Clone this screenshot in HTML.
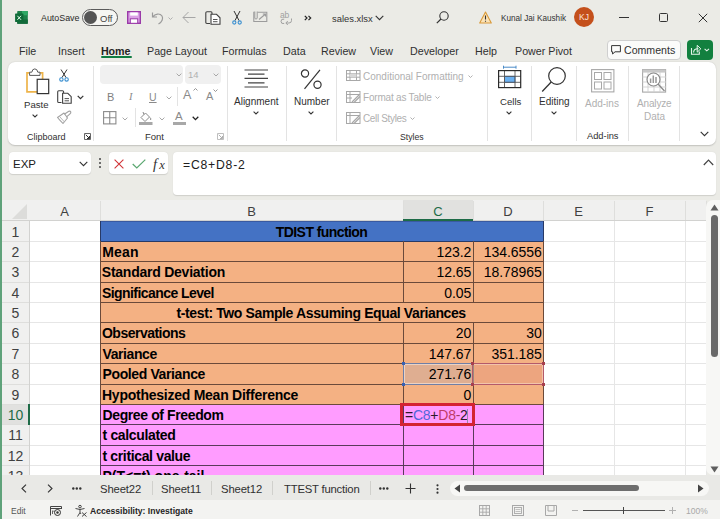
<!DOCTYPE html>
<html><head><meta charset="utf-8">
<style>
*{box-sizing:border-box;margin:0;padding:0}
html,body{width:720px;height:519px;overflow:hidden}
body{position:relative;background:#ebebe6;font-family:"Liberation Sans",sans-serif;color:#242424}
.a{position:absolute;white-space:nowrap}
svg{position:absolute;overflow:visible}
.t{font-size:10.7px;color:#303030;margin-top:1px}
</style></head><body>
<!-- window left border -->
<div class="a" style="left:0;top:0;width:2px;height:519px;background:#5fa27a"></div>

<!-- ===== TITLE BAR ===== -->
<div id="title">
<!-- excel icon -->
<svg style="left:15px;top:11px" width="14" height="14" viewBox="0 0 14 14">
<rect x="2.2" y="0" width="10.6" height="12.8" rx="0.8" fill="#1d8049"/>
<rect x="7" y="0" width="5.8" height="4.3" fill="#2fa865"/>
<rect x="2.2" y="8.5" width="10.6" height="4.3" fill="#146a3b"/>
<rect x="0.1" y="2.6" width="8.3" height="8.4" rx="0.6" fill="#0f6b38"/>
<path d="M2.4 4.8 L6 8.8 M6 4.8 L2.4 8.8" stroke="#e8fff0" stroke-width="1"/>
</svg>
<div class="a" style="left:41px;top:13px;font-size:8.9px;color:#2a2a2a">AutoSave</div>
<div class="a" style="left:82px;top:9px;width:36px;height:17px;border:1px solid #5a5a5a;border-radius:9px;background:#f6f6f3"></div>
<div class="a" style="left:84px;top:11px;width:13px;height:13px;border-radius:50%;background:#555"></div>
<div class="a" style="left:100px;top:13px;font-size:9.5px;color:#444">Off</div>
<!-- save -->
<svg style="left:127px;top:11px" width="14" height="13" viewBox="0 0 14 13">
<rect x="0.7" y="0.7" width="12.6" height="11.6" fill="#dba2e6" stroke="#9a3aa8" stroke-width="1.4"/>
<rect x="3.2" y="1.4" width="7.6" height="3.2" fill="#fff"/>
<rect x="3.3" y="7.8" width="7.4" height="4.5" fill="#fff" stroke="#9a3aa8" stroke-width="1"/>
</svg>
<!-- undo -->
<svg style="left:151px;top:11px" width="22" height="14" viewBox="0 0 22 14">
<path d="M1.5 1.5 V6 H6 M1.8 5.8 C4 2.5 9 2 11 5 C12.5 7.5 11 11 7.5 13" fill="none" stroke="#9a9a9a" stroke-width="1.2"/>
<path d="M17.5 6.5 L19.5 8.5 L21.5 6.5" fill="none" stroke="#a8a8a8" stroke-width="0.9"/>
</svg>
<!-- back arrow -->
<svg style="left:182px;top:11px" width="14" height="13" viewBox="0 0 14 13">
<path d="M13.5 6.5 H1 M6.5 1 L1 6.5 L6.5 12" fill="none" stroke="#a6a6a6" stroke-width="1"/>
</svg>
<!-- copy -->
<svg style="left:205px;top:11px" width="16" height="14" viewBox="0 0 16 14">
<path d="M5 12.5 H2 Q0.8 12.5 0.8 11.3 V1.8 Q0.8 0.7 2 0.7 H6 Q7 0.7 7 2 V3" fill="none" stroke="#404040" stroke-width="1.1"/>
<path d="M6 3.3 H11.5 L15 6.8 V13.3 H6 Z" fill="#fff" stroke="#404040" stroke-width="1.1"/>
<path d="M8 8.5 H12.5 M8 10.7 H12.5" stroke="#404040" stroke-width="0.9"/>
</svg>
<!-- scissors -->
<svg style="left:231px;top:10px" width="12" height="15" viewBox="0 0 12 15">
<path d="M3 1 L8 10.5 M9 1 L4 10.5" stroke="#333" stroke-width="1"/>
<circle cx="3.3" cy="12.5" r="1.6" fill="none" stroke="#3a8fd0" stroke-width="1.1"/>
<circle cx="8.7" cy="12.5" r="1.6" fill="none" stroke="#3a8fd0" stroke-width="1.1"/>
</svg>
<!-- picture -->
<svg style="left:253px;top:11px" width="15" height="12" viewBox="0 0 15 12">
<path d="M4.5 1.2 H13.8 V10.5 H0.8 V1.2 H1.5" fill="none" stroke="#9c9c9c" stroke-width="1.1"/>
<path d="M1.8 0.5 V7 Q1.8 8 3 8 Q4.2 8 4.2 7 V0.5" fill="none" stroke="#9c9c9c" stroke-width="1"/>
<path d="M6 8.5 L12.5 3 M9.8 3 H12.5 V5.5" fill="none" stroke="#9c9c9c" stroke-width="1.1"/>
</svg>
<!-- ab -->
<div class="a" style="left:280px;top:9.5px;font-size:8.5px;color:#a0a0a0;letter-spacing:-0.2px">ab</div>
<svg style="left:280px;top:18px" width="13" height="7" viewBox="0 0 13 7">
<path d="M4.2 1.2 Q1 0.5 1 3.3 Q1 6.2 4.2 5.5" fill="none" stroke="#a0a0a0" stroke-width="1"/>
<path d="M11.5 0.5 V2.5 Q11.5 5 9 5 H6 M7.8 3 L5.8 5 L7.8 7" fill="none" stroke="#a0a0a0" stroke-width="1"/>
</svg>
<svg style="left:304px;top:15px" width="8" height="6" viewBox="0 0 8 6"><path d="M0.8 0.8 L3 3 L0.8 5.2 M4.5 0.8 L6.7 3 L4.5 5.2" fill="none" stroke="#222" stroke-width="1.2"/></svg>
<div class="a" style="left:332px;top:12.5px;font-size:9.4px;color:#333">sales.xlsx</div>
<svg style="left:375px;top:15px" width="9" height="6" viewBox="0 0 9 6"><path d="M0.7 0.8 L4.5 4.6 L8.3 0.8" fill="none" stroke="#333" stroke-width="1.1"/></svg>
<!-- search -->
<svg style="left:436px;top:11px" width="13" height="13" viewBox="0 0 13 13">
<circle cx="8" cy="5" r="4.2" fill="none" stroke="#333" stroke-width="1.1"/>
<path d="M5 8 L0.8 12.2" stroke="#333" stroke-width="1.2"/>
</svg>
<!-- warning -->
<svg style="left:479px;top:11px" width="13" height="13" viewBox="0 0 13 13">
<path d="M6.5 1 L12.3 12 H0.7 Z" fill="#fbe3b8" stroke="#d99a3a" stroke-width="1.1" stroke-linejoin="round"/>
<path d="M6.5 4.5 V8.5 M6.5 9.7 V10.8" stroke="#333" stroke-width="1.1"/>
</svg>
<div class="a" style="left:501px;top:13.5px;font-size:8.2px;color:#333">Kunal Jai Kaushik</div>
<div class="a" style="left:574px;top:7px;width:20px;height:20px;border-radius:50%;background:#c4501c;color:#fde7da;font-size:8.5px;line-height:20px;text-align:center">KJ</div>
<!-- window controls -->
<div class="a" style="left:619px;top:17px;width:10px;height:1px;background:#333"></div>
<div class="a" style="left:659px;top:13px;width:9px;height:9px;border:1px solid #333;border-radius:1.5px"></div>
<svg style="left:698px;top:13px" width="10" height="10" viewBox="0 0 10 10"><path d="M0.8 0.8 L9.2 9.2 M9.2 0.8 L0.8 9.2" stroke="#333" stroke-width="1"/></svg>
</div>

<!-- ===== MENU ===== -->
<div id="menu">
<div class="a t" style="left:19px;top:44px">File</div>
<div class="a t" style="left:58px;top:44px">Insert</div>
<div class="a t" style="left:101px;top:44px;font-weight:bold;color:#242424;letter-spacing:-0.1px">Home</div>
<div class="a" style="left:101px;top:56px;width:31px;height:2px;background:#107c41;border-radius:1px"></div>
<div class="a t" style="left:147px;top:44px">Page Layout</div>
<div class="a t" style="left:222px;top:44px">Formulas</div>
<div class="a t" style="left:283px;top:44px">Data</div>
<div class="a t" style="left:321px;top:44px">Review</div>
<div class="a t" style="left:370px;top:44px">View</div>
<div class="a t" style="left:410px;top:44px">Developer</div>
<div class="a t" style="left:475px;top:44px">Help</div>
<div class="a t" style="left:515px;top:44px">Power Pivot</div>
<div class="a" style="left:607px;top:40px;width:74px;height:20px;border:1px solid #cfcfcf;border-radius:4px;background:#fbfbfa"></div>
<svg style="left:611px;top:45px" width="10" height="10" viewBox="0 0 10 10"><path d="M0.6 0.6 H9.4 V6.8 H4 L1.6 9 V6.8 H0.6 Z" fill="none" stroke="#333" stroke-width="1" stroke-linejoin="round"/></svg>
<div class="a t" style="left:624px;top:43px;font-size:10.6px">Comments</div>
<div class="a" style="left:687px;top:40px;width:26px;height:20px;border-radius:4px;background:#13803f"></div>
<svg style="left:689px;top:43px" width="22" height="14" viewBox="0 0 22 14">
<path d="M2.5 5 V11.3 H10.3 V8.5" fill="none" stroke="#e8f5ec" stroke-width="1.1"/>
<path d="M4.6 9.5 Q4.6 5.8 8.8 5.8 H9.5" fill="none" stroke="#e8f5ec" stroke-width="1.1"/>
<path d="M8.2 2.3 L11.8 5.8 L8.2 9.2 Z" fill="none" stroke="#e8f5ec" stroke-width="1" stroke-linejoin="round"/>
<path d="M15.6 5.8 L17.8 7.8 L20 5.8" fill="none" stroke="#e8f5ec" stroke-width="1.1"/>
</svg>
</div>

<!-- ===== RIBBON ===== -->
<div class="a" style="left:8px;top:62px;width:708px;height:83px;background:#fff;border-radius:7px;box-shadow:0 0.5px 1.5px rgba(0,0,0,.18)"></div>
<!-- separators -->
<div class="a" style="left:93px;top:66px;width:1px;height:75px;background:#e3e3e3"></div>
<div class="a" style="left:227px;top:66px;width:1px;height:75px;background:#e3e3e3"></div>
<div class="a" style="left:286px;top:66px;width:1px;height:75px;background:#e3e3e3"></div>
<div class="a" style="left:336px;top:66px;width:1px;height:75px;background:#e3e3e3"></div>
<div class="a" style="left:487px;top:66px;width:1px;height:75px;background:#e3e3e3"></div>
<div class="a" style="left:531px;top:66px;width:1px;height:75px;background:#e3e3e3"></div>
<div class="a" style="left:576px;top:66px;width:1px;height:75px;background:#e3e3e3"></div>
<div class="a" style="left:628px;top:66px;width:1px;height:75px;background:#e3e3e3"></div>
<div class="a" style="left:679px;top:66px;width:1px;height:75px;background:#e3e3e3"></div>
<!-- Clipboard -->
<svg style="left:26px;top:68px" width="24" height="27" viewBox="0 0 24 27">
<path d="M3.5 4.9 H1 V23.9 H11" fill="none" stroke="#eeb44a" stroke-width="1.7"/>
<path d="M14 4.9 H16.6 V11" fill="none" stroke="#eeb44a" stroke-width="1.7"/>
<path d="M3.6 7.4 V4.2 H5.8 Q6.3 0.9 8.8 0.9 Q11.3 0.9 11.8 4.2 H14 V7.4 Z" fill="#fff" stroke="#5a5a5a" stroke-width="1"/>
<rect x="11.2" y="11.3" width="11.5" height="14.3" fill="#fff" stroke="#333" stroke-width="1.2"/>
</svg>
<div class="a" style="left:24px;top:99px;font-size:9.6px;color:#303030">Paste</div>
<svg style="left:32px;top:114px" width="6" height="4" viewBox="0 0 6 4"><path d="M0.6 0.6 L3 3 L5.4 0.6" fill="none" stroke="#333" stroke-width="1.1"/></svg>
<svg style="left:59px;top:69px" width="10" height="13" viewBox="0 0 10 13">
<path d="M2 0.5 L7 8.5 M8 0.5 L3 8.5" stroke="#333" stroke-width="1"/>
<circle cx="2.4" cy="10.4" r="1.7" fill="none" stroke="#3a8fd0" stroke-width="1.1"/>
<circle cx="7.6" cy="10.4" r="1.7" fill="none" stroke="#3a8fd0" stroke-width="1.1"/>
</svg>
<svg style="left:57px;top:90px" width="15" height="14" viewBox="0 0 15 14">
<path d="M4.5 12.5 H1.8 Q0.7 12.5 0.7 11.4 V1.8 Q0.7 0.7 1.8 0.7 H5.5 Q6.6 0.7 6.6 1.8 V3" fill="none" stroke="#404040" stroke-width="1.1"/>
<path d="M5.6 3.3 H10.8 L14.2 6.7 V13.3 H5.6 Z" fill="#fff" stroke="#404040" stroke-width="1.1"/>
<path d="M7.6 8.6 H12 M7.6 10.8 H12" stroke="#404040" stroke-width="0.9"/>
</svg>
<svg style="left:77px;top:95px" width="7" height="5" viewBox="0 0 7 5"><path d="M0.7 0.8 L3.5 3.6 L6.3 0.8" fill="none" stroke="#333" stroke-width="1.2"/></svg>
<svg style="left:52px;top:106px" width="24" height="22" viewBox="0 0 24 22">
<path d="M5.5 11.5 L12 7 L15.5 12 L11 17.5 Z" fill="none" stroke="#a2a2a2" stroke-width="1.1" stroke-linejoin="round"/>
<path d="M8 11 L12.5 16 M7 13.5 L10 16.5" stroke="#b0b0b0" stroke-width="0.9"/>
<path d="M12.3 8.2 L16.8 5.2 Q18.3 4.8 18.8 6 Q19 7 18 7.8 L14.3 11.2" fill="none" stroke="#a2a2a2" stroke-width="1.1" stroke-linejoin="round"/>
</svg>
<div class="a" style="left:27px;top:132px;font-size:9px;color:#303030">Clipboard</div>
<svg style="left:84px;top:133px" width="7" height="7" viewBox="0 0 7 7"><path d="M0.5 0.5 H6.5 V6.5 H0.5 Z" fill="none" stroke="#555" stroke-width="0.9"/><path d="M1.8 1.8 L5.5 5.5 M5.5 3 V5.5 H3" fill="none" stroke="#333" stroke-width="1"/></svg>
<!-- Font -->
<div class="a" style="left:100px;top:65px;width:83px;height:19px;background:#f0f0f0;border-radius:4px"></div>
<svg style="left:176px;top:73px" width="6" height="4" viewBox="0 0 6 4"><path d="M0.6 0.6 L3 3 L5.4 0.6" fill="none" stroke="#a8a8a8" stroke-width="1"/></svg>
<div class="a" style="left:185px;top:65px;width:36px;height:19px;background:#f0f0f0;border-radius:4px"></div>
<div class="a" style="left:188px;top:69px;font-size:9.5px;color:#b0b0b0">14</div>
<svg style="left:213px;top:73px" width="6" height="4" viewBox="0 0 6 4"><path d="M0.6 0.6 L3 3 L5.4 0.6" fill="none" stroke="#a8a8a8" stroke-width="1"/></svg>
<div class="a" style="left:107px;top:90.5px;font-size:11px;color:#808080">B</div>
<div class="a" style="left:129px;top:90.5px;font-size:10.5px;font-style:italic;color:#8a8a8a;font-family:'Liberation Serif',serif">I</div>
<div class="a" style="left:149px;top:90.5px;font-size:10.5px;color:#8a8a8a;text-decoration:underline">U</div>
<svg style="left:166px;top:96px" width="6" height="4" viewBox="0 0 6 4"><path d="M0.6 0.6 L3 3 L5.4 0.6" fill="none" stroke="#a8a8a8" stroke-width="1"/></svg>
<div class="a" style="left:177px;top:87px;width:1px;height:19px;background:#e3e3e3"></div>
<div class="a" style="left:183px;top:88px;font-size:12.5px;color:#8a8a8a">A</div>
<svg style="left:193px;top:88px" width="5" height="3" viewBox="0 0 5 3"><path d="M0.5 2.5 L2.5 0.5 L4.5 2.5" fill="none" stroke="#8a8a8a" stroke-width="0.9"/></svg>
<div class="a" style="left:206px;top:90px;font-size:11px;color:#8a8a8a">A</div>
<svg style="left:213px;top:89px" width="5" height="3" viewBox="0 0 5 3"><path d="M0.5 0.5 L2.5 2.5 L4.5 0.5" fill="none" stroke="#8a8a8a" stroke-width="0.9"/></svg>
<svg style="left:103px;top:111px" width="14" height="14" viewBox="0 0 14 14"><rect x="0.6" y="0.6" width="12.3" height="12.3" fill="none" stroke="#8a8a8a" stroke-width="1.1"/><path d="M6.75 0.6 V12.9 M0.6 6.75 H12.9" stroke="#8a8a8a" stroke-width="1.1"/></svg>
<svg style="left:122px;top:117px" width="6" height="4" viewBox="0 0 6 4"><path d="M0.6 0.6 L3 3 L5.4 0.6" fill="none" stroke="#a8a8a8" stroke-width="1"/></svg>
<div class="a" style="left:135px;top:108px;width:1px;height:19px;background:#e3e3e3"></div>
<svg style="left:139px;top:111px" width="14" height="14" viewBox="0 0 14 14"><path d="M2 6.5 L6.5 2 L10.5 6 L6 10.5 Z" fill="none" stroke="#8a8a8a" stroke-width="1"/><path d="M5 3.5 L4 1" stroke="#8a8a8a" stroke-width="1"/><path d="M11 6.5 Q12.5 8 11.5 9" fill="none" stroke="#8a8a8a" stroke-width="1"/><rect x="0" y="11" width="13.5" height="3" fill="#a8a8a8"/></svg>
<svg style="left:159px;top:117px" width="6" height="4" viewBox="0 0 6 4"><path d="M0.6 0.6 L3 3 L5.4 0.6" fill="none" stroke="#a8a8a8" stroke-width="1"/></svg>
<div class="a" style="left:175px;top:109.5px;font-size:11.5px;color:#8a8a8a">A</div>
<div class="a" style="left:173px;top:122px;width:13px;height:3px;background:#a8a8a8"></div>
<svg style="left:192px;top:116px" width="7" height="5" viewBox="0 0 7 5"><path d="M0.7 0.8 L3.5 3.6 L6.3 0.8" fill="none" stroke="#222" stroke-width="1.3"/></svg>
<div class="a" style="left:145px;top:131px;font-size:9.5px;color:#303030">Font</div>
<svg style="left:217px;top:133px" width="7" height="7" viewBox="0 0 7 7"><path d="M0.5 0.5 H6.5 V6.5 H0.5 Z" fill="none" stroke="#b8b8b8" stroke-width="0.9"/><path d="M1.8 1.8 L5.5 5.5 M5.5 3 V5.5 H3" fill="none" stroke="#b0b0b0" stroke-width="1"/></svg>
<!-- Alignment -->
<svg style="left:244px;top:69px" width="25" height="19" viewBox="0 0 25 19">
<path d="M0.5 1 H24 M4 5.2 H20.5 M0.5 9.3 H24 M4 13.8 H20.5 M0.5 18 H24" stroke="#444" stroke-width="1.2"/>
</svg>
<div class="a" style="left:234px;top:95.8px;font-size:10px;color:#303030">Alignment</div>
<svg style="left:253px;top:111px" width="6" height="4" viewBox="0 0 6 4"><path d="M0.6 0.6 L3 3 L5.4 0.6" fill="none" stroke="#333" stroke-width="1.1"/></svg>
<!-- Number -->
<svg style="left:300px;top:69px" width="23" height="21" viewBox="0 0 23 21">
<circle cx="5" cy="4.5" r="3.6" fill="none" stroke="#333" stroke-width="1.2"/>
<circle cx="17.5" cy="15.8" r="3.6" fill="none" stroke="#333" stroke-width="1.2"/>
<path d="M20 0.8 L4.5 19.8" stroke="#333" stroke-width="1.2"/>
</svg>
<div class="a" style="left:294px;top:95.8px;font-size:10px;color:#303030">Number</div>
<svg style="left:308px;top:111px" width="6" height="4" viewBox="0 0 6 4"><path d="M0.6 0.6 L3 3 L5.4 0.6" fill="none" stroke="#333" stroke-width="1.1"/></svg>
<!-- Styles -->
<svg style="left:346px;top:70px" width="15" height="11" viewBox="0 0 15 11"><rect x="0.5" y="0.5" width="13.5" height="10" fill="none" stroke="#a8a8a8" stroke-width="1"/><path d="M0.5 3.8 H14 M0.5 7.2 H14 M4 0.5 V10.5 M10.5 0.5 V10.5" stroke="#a8a8a8" stroke-width="1"/><rect x="4" y="3.8" width="6.5" height="3.4" fill="#d8d8d8"/></svg>
<div class="a" style="left:363px;top:70.5px;font-size:10px;color:#b0b0b0">Conditional Formatting</div>
<svg style="left:468px;top:74.5px" width="5" height="3" viewBox="0 0 5 3"><path d="M0.5 0.5 L2.5 2.5 L4.5 0.5" fill="none" stroke="#a8a8a8" stroke-width="0.9"/></svg>
<svg style="left:346px;top:91px" width="15" height="12" viewBox="0 0 15 12"><rect x="0.5" y="0.5" width="13.5" height="11" fill="none" stroke="#a8a8a8" stroke-width="1"/><path d="M0.5 3.5 H14 M0.5 7 H6 M4 0.5 V11.5" stroke="#a8a8a8" stroke-width="1"/><path d="M6 11 L13.5 3.5 M8 11.5 L14 5.5" stroke="#a8a8a8" stroke-width="1.2"/></svg>
<div class="a" style="left:363px;top:92px;font-size:10px;letter-spacing:-0.2px;color:#b0b0b0">Format as Table</div>
<svg style="left:435px;top:96px" width="5" height="3" viewBox="0 0 5 3"><path d="M0.5 0.5 L2.5 2.5 L4.5 0.5" fill="none" stroke="#a8a8a8" stroke-width="0.9"/></svg>
<svg style="left:346px;top:112px" width="15" height="12" viewBox="0 0 15 12"><rect x="0.5" y="0.5" width="13.5" height="11" fill="none" stroke="#a8a8a8" stroke-width="1"/><path d="M0.5 3.5 H14 M4 0.5 V11.5" stroke="#a8a8a8" stroke-width="1"/><path d="M6 11 L13.5 3.5 M8 11.5 L14 5.5" stroke="#a8a8a8" stroke-width="1.2"/></svg>
<div class="a" style="left:363px;top:113px;font-size:10px;letter-spacing:-0.35px;color:#b0b0b0">Cell Styles</div>
<svg style="left:410px;top:117px" width="5" height="3" viewBox="0 0 5 3"><path d="M0.5 0.5 L2.5 2.5 L4.5 0.5" fill="none" stroke="#a8a8a8" stroke-width="0.9"/></svg>
<div class="a" style="left:400px;top:132px;font-size:8.7px;color:#303030">Styles</div>
<!-- Cells -->
<svg style="left:498px;top:66px" width="24" height="23" viewBox="0 0 24 23">
<path d="M5.5 1.2 H18 M5.5 -0.3 V2.7 M18 -0.3 V2.7" stroke="#4a8cc8" stroke-width="1"/>
<rect x="6.5" y="10.3" width="10.5" height="6" fill="#6ab0f0" stroke="#2a64a8" stroke-width="0.8"/>
<path d="M0.6 10.3 H22.7 M0.6 16.3 H22.7 M6.5 4.6 V21.6 M17 4.6 V21.6" stroke="#555" stroke-width="0.9"/>
<rect x="0.6" y="4.6" width="22.1" height="17" fill="none" stroke="#2a2a2a" stroke-width="1.2"/>
</svg>
<div class="a" style="left:500px;top:95.8px;font-size:9.6px;color:#303030">Cells</div>
<svg style="left:506px;top:111px" width="6" height="4" viewBox="0 0 6 4"><path d="M0.6 0.6 L3 3 L5.4 0.6" fill="none" stroke="#333" stroke-width="1.1"/></svg>
<!-- Editing -->
<svg style="left:541px;top:66px" width="26" height="27" viewBox="0 0 26 27">
<circle cx="16" cy="10" r="8.3" fill="none" stroke="#333" stroke-width="1.2"/>
<path d="M10.2 16 L1.2 25.5" stroke="#333" stroke-width="1.3"/>
</svg>
<div class="a" style="left:539px;top:95.8px;font-size:10px;color:#303030">Editing</div>
<svg style="left:551px;top:111px" width="6" height="4" viewBox="0 0 6 4"><path d="M0.6 0.6 L3 3 L5.4 0.6" fill="none" stroke="#333" stroke-width="1.1"/></svg>
<!-- Add-ins -->
<svg style="left:591px;top:69px" width="24" height="24" viewBox="0 0 24 24">
<rect x="0.6" y="0.6" width="22.3" height="22.3" fill="none" stroke="#a8a8a8" stroke-width="1.1"/>
<rect x="3.5" y="3.5" width="7" height="7" fill="none" stroke="#a8a8a8" stroke-width="1"/>
<rect x="13" y="3.5" width="7" height="7" fill="none" stroke="#a8a8a8" stroke-width="1"/>
<rect x="3.5" y="13" width="7" height="7" fill="none" stroke="#a8a8a8" stroke-width="1"/>
<rect x="13" y="13" width="7" height="7" fill="none" stroke="#a8a8a8" stroke-width="1"/>
</svg>
<div class="a" style="left:585px;top:97.5px;font-size:10px;color:#b0b0b0">Add-ins</div>
<div class="a" style="left:587px;top:130.5px;font-size:9.3px;color:#303030">Add-ins</div>
<!-- Analyze Data -->
<svg style="left:642px;top:69px" width="25" height="25" viewBox="0 0 25 25">
<rect x="0.6" y="0.6" width="23" height="22.5" fill="none" stroke="#a8a8a8" stroke-width="1.1"/>
<rect x="0.6" y="0.6" width="23" height="3" fill="#c8c8c8"/>
<path d="M0.6 8 H24 M0.6 13 H24 M0.6 18 H24 M6 3 V23 M12 3 V23 M18 3 V23" stroke="#d0d0d0" stroke-width="0.9"/>
<circle cx="11.5" cy="10.5" r="6.5" fill="#fff" stroke="#8a8a8a" stroke-width="1.2"/>
<path d="M8.6 14 V9.5 M11.3 14 V6.5 M14 14 V8" stroke="#999" stroke-width="1.5"/>
<path d="M16 15 L22.5 22" stroke="#8a8a8a" stroke-width="1.3"/>
</svg>
<div class="a" style="left:637px;top:97.5px;font-size:10px;letter-spacing:-0.15px;color:#b0b0b0">Analyze</div>
<div class="a" style="left:644px;top:111px;font-size:10px;color:#b0b0b0">Data</div>
<svg style="left:700px;top:131px" width="9" height="6" viewBox="0 0 9 6"><path d="M0.7 0.8 L4.5 4.6 L8.3 0.8" fill="none" stroke="#333" stroke-width="1.1"/></svg>

<!-- ===== FORMULA BAR ===== -->
<div class="a" style="left:9px;top:152px;width:82px;height:22px;background:#fff;border-radius:4px;box-shadow:0 0.5px 1px rgba(0,0,0,.12)"></div>
<div class="a" style="left:13px;top:158px;font-size:11.5px;color:#202020">EXP</div>
<svg style="left:79px;top:161px" width="9" height="6" viewBox="0 0 9 6"><path d="M0.7 0.8 L4.5 4.6 L8.3 0.8" fill="none" stroke="#333" stroke-width="1.1"/></svg>
<div class="a" style="left:99px;top:158px;width:2px;height:2px;background:#444;border-radius:1px"></div>
<div class="a" style="left:99px;top:162px;width:2px;height:2px;background:#444;border-radius:1px"></div>
<div class="a" style="left:99px;top:166px;width:2px;height:2px;background:#444;border-radius:1px"></div>
<div class="a" style="left:109px;top:152px;width:59px;height:22px;background:#fff;border-radius:4px;box-shadow:0 0.5px 1px rgba(0,0,0,.12)"></div>
<svg style="left:114px;top:159px" width="10" height="10" viewBox="0 0 10 10"><path d="M0.6 0.6 L9.4 9.4 M9.4 0.6 L0.6 9.4" stroke="#d13438" stroke-width="1.1"/></svg>
<svg style="left:132px;top:159px" width="14" height="10" viewBox="0 0 14 10"><path d="M0.7 5 L4.8 9 L13.3 0.6" fill="none" stroke="#5aa770" stroke-width="1.2"/></svg>
<div class="a" style="left:153px;top:155.5px;font-size:14.5px;font-style:italic;font-family:'Liberation Serif',serif;color:#333;letter-spacing:0.6px">f<span style="font-size:12.5px;margin-left:1.5px">x</span></div>
<div class="a" style="left:173px;top:152px;width:543px;height:43px;background:#fff;border-radius:4px;box-shadow:0 0.5px 1px rgba(0,0,0,.12)"></div>
<div class="a" style="left:183px;top:158px;font-size:12.2px;letter-spacing:0.8px;color:#202020">=C8+D8-2</div>
<svg style="left:703px;top:159px" width="11" height="7" viewBox="0 0 11 7"><path d="M0.8 6 L5.5 1.2 L10.2 6" fill="none" stroke="#444" stroke-width="1.2"/></svg>

<!-- ===== GRID ===== -->
<div class="a" style="left:2px;top:200px;width:704px;height:275px;background:#fff"></div>
<div class="a" style="left:2px;top:200px;width:704px;height:21px;background:#f0f0ef"></div>
<div class="a" style="left:2px;top:221px;width:27px;height:254px;background:#f0f0ef"></div>
<svg style="left:0;top:0" width="720" height="519"><path d="M12 219 L27 219 L27 204 Z" fill="#dcdcda"/></svg>
<div class="a" style="left:403px;top:200px;width:70px;height:21px;background:#e1e1df"></div>
<div class="a" style="left:2px;top:404px;width:27px;height:20px;background:#e1e1df"></div>
<div class="a" style="left:100px;top:221px;width:1px;height:254px;background:#e6e6e6"></div>
<div class="a" style="left:403px;top:221px;width:1px;height:254px;background:#e6e6e6"></div>
<div class="a" style="left:473px;top:221px;width:1px;height:254px;background:#e6e6e6"></div>
<div class="a" style="left:543px;top:221px;width:1px;height:254px;background:#e6e6e6"></div>
<div class="a" style="left:614px;top:221px;width:1px;height:254px;background:#e6e6e6"></div>
<div class="a" style="left:685px;top:221px;width:1px;height:254px;background:#e6e6e6"></div>
<div class="a" style="left:706px;top:221px;width:1px;height:254px;background:#e6e6e6"></div>
<div class="a" style="left:29px;top:241px;width:677px;height:1px;background:#e6e6e6"></div>
<div class="a" style="left:29px;top:261px;width:677px;height:1px;background:#e6e6e6"></div>
<div class="a" style="left:29px;top:282px;width:677px;height:1px;background:#e6e6e6"></div>
<div class="a" style="left:29px;top:302px;width:677px;height:1px;background:#e6e6e6"></div>
<div class="a" style="left:29px;top:322px;width:677px;height:1px;background:#e6e6e6"></div>
<div class="a" style="left:29px;top:343px;width:677px;height:1px;background:#e6e6e6"></div>
<div class="a" style="left:29px;top:363px;width:677px;height:1px;background:#e6e6e6"></div>
<div class="a" style="left:29px;top:384px;width:677px;height:1px;background:#e6e6e6"></div>
<div class="a" style="left:29px;top:404px;width:677px;height:1px;background:#e6e6e6"></div>
<div class="a" style="left:29px;top:424px;width:677px;height:1px;background:#e6e6e6"></div>
<div class="a" style="left:29px;top:445px;width:677px;height:1px;background:#e6e6e6"></div>
<div class="a" style="left:29px;top:465px;width:677px;height:1px;background:#e6e6e6"></div>
<div class="a" style="left:100px;top:201px;width:1px;height:19px;background:#dededc"></div>
<div class="a" style="left:403px;top:201px;width:1px;height:19px;background:#dededc"></div>
<div class="a" style="left:473px;top:201px;width:1px;height:19px;background:#dededc"></div>
<div class="a" style="left:543px;top:201px;width:1px;height:19px;background:#dededc"></div>
<div class="a" style="left:614px;top:201px;width:1px;height:19px;background:#dededc"></div>
<div class="a" style="left:685px;top:201px;width:1px;height:19px;background:#dededc"></div>
<div class="a" style="left:706px;top:201px;width:1px;height:19px;background:#dededc"></div>
<div class="a" style="left:2px;top:220px;width:704px;height:1px;background:#d2d2d0"></div>
<div class="a" style="left:403px;top:219px;width:70px;height:2px;background:#1e6b47"></div>
<div class="a" style="left:2px;top:241px;width:27px;height:1px;background:#dededc"></div>
<div class="a" style="left:2px;top:261px;width:27px;height:1px;background:#dededc"></div>
<div class="a" style="left:2px;top:282px;width:27px;height:1px;background:#dededc"></div>
<div class="a" style="left:2px;top:302px;width:27px;height:1px;background:#dededc"></div>
<div class="a" style="left:2px;top:322px;width:27px;height:1px;background:#dededc"></div>
<div class="a" style="left:2px;top:343px;width:27px;height:1px;background:#dededc"></div>
<div class="a" style="left:2px;top:363px;width:27px;height:1px;background:#dededc"></div>
<div class="a" style="left:2px;top:384px;width:27px;height:1px;background:#dededc"></div>
<div class="a" style="left:2px;top:404px;width:27px;height:1px;background:#dededc"></div>
<div class="a" style="left:2px;top:424px;width:27px;height:1px;background:#dededc"></div>
<div class="a" style="left:2px;top:445px;width:27px;height:1px;background:#dededc"></div>
<div class="a" style="left:2px;top:465px;width:27px;height:1px;background:#dededc"></div>
<div class="a" style="left:29px;top:221px;width:1px;height:254px;background:#d2d2d0"></div>
<div class="a" style="left:28px;top:404px;width:2px;height:21px;background:#1e6b47"></div>
<div class="a" style="left:29px;top:202px;width:71px;height:20px;line-height:20px;text-align:center;font-size:13px;color:#404040">A</div>
<div class="a" style="left:100px;top:202px;width:303px;height:20px;line-height:20px;text-align:center;font-size:13px;color:#404040">B</div>
<div class="a" style="left:403px;top:202px;width:70px;height:20px;line-height:20px;text-align:center;font-size:13px;color:#1e6b47">C</div>
<div class="a" style="left:473px;top:202px;width:70px;height:20px;line-height:20px;text-align:center;font-size:13px;color:#404040">D</div>
<div class="a" style="left:543px;top:202px;width:71px;height:20px;line-height:20px;text-align:center;font-size:13px;color:#404040">E</div>
<div class="a" style="left:614px;top:202px;width:71px;height:20px;line-height:20px;text-align:center;font-size:13px;color:#404040">F</div>
<div class="a" style="left:2px;top:222px;width:27px;height:20px;line-height:20px;text-align:center;font-size:14px;color:#404040">1</div>
<div class="a" style="left:2px;top:242px;width:27px;height:20px;line-height:20px;text-align:center;font-size:14px;color:#404040">2</div>
<div class="a" style="left:2px;top:262px;width:27px;height:21px;line-height:21px;text-align:center;font-size:14px;color:#404040">3</div>
<div class="a" style="left:2px;top:283px;width:27px;height:20px;line-height:20px;text-align:center;font-size:14px;color:#404040">4</div>
<div class="a" style="left:2px;top:303px;width:27px;height:20px;line-height:20px;text-align:center;font-size:14px;color:#404040">5</div>
<div class="a" style="left:2px;top:323px;width:27px;height:21px;line-height:21px;text-align:center;font-size:14px;color:#404040">6</div>
<div class="a" style="left:2px;top:344px;width:27px;height:20px;line-height:20px;text-align:center;font-size:14px;color:#404040">7</div>
<div class="a" style="left:2px;top:364px;width:27px;height:21px;line-height:21px;text-align:center;font-size:14px;color:#404040">8</div>
<div class="a" style="left:2px;top:385px;width:27px;height:20px;line-height:20px;text-align:center;font-size:14px;color:#404040">9</div>
<div class="a" style="left:2px;top:405px;width:27px;height:20px;line-height:20px;text-align:center;font-size:14px;color:#1e6b47">10</div>
<div class="a" style="left:2px;top:425px;width:27px;height:21px;line-height:21px;text-align:center;font-size:14px;color:#404040">11</div>
<div class="a" style="left:2px;top:446px;width:27px;height:20px;line-height:20px;text-align:center;font-size:14px;color:#404040">12</div>
<div class="a" style="left:2px;top:466px;width:27px;height:20px;line-height:20px;text-align:center;font-size:14px;color:#404040">13</div>
<div class="a" style="left:100px;top:221px;width:444px;height:21px;background:#4472c4"></div>
<div class="a" style="left:100px;top:241px;width:444px;height:164px;background:#f4b183"></div>
<div class="a" style="left:100px;top:404px;width:444px;height:82px;background:#ff9cff"></div>
<div class="a" style="left:403px;top:363px;width:70px;height:21px;background:#dfae91"></div>
<div class="a" style="left:473px;top:363px;width:70px;height:21px;background:#eda57f"></div>
<div class="a" style="left:100px;top:221px;width:444px;height:1px;background:#3a5aa0"></div>
<div class="a" style="left:100px;top:241px;width:444px;height:1px;background:#283a66"></div>
<div class="a" style="left:100px;top:261px;width:444px;height:1px;background:#6b4a3a"></div>
<div class="a" style="left:100px;top:282px;width:444px;height:1px;background:#6b4a3a"></div>
<div class="a" style="left:100px;top:302px;width:444px;height:1px;background:#6b4a3a"></div>
<div class="a" style="left:100px;top:322px;width:444px;height:1px;background:#6b4a3a"></div>
<div class="a" style="left:100px;top:343px;width:444px;height:1px;background:#6b4a3a"></div>
<div class="a" style="left:100px;top:363px;width:444px;height:1px;background:#6b4a3a"></div>
<div class="a" style="left:100px;top:384px;width:444px;height:1px;background:#6b4a3a"></div>
<div class="a" style="left:100px;top:404px;width:444px;height:1px;background:#6b4a3a"></div>
<div class="a" style="left:100px;top:424px;width:444px;height:1px;background:#5a3a5a"></div>
<div class="a" style="left:100px;top:445px;width:444px;height:1px;background:#5a3a5a"></div>
<div class="a" style="left:100px;top:465px;width:444px;height:1px;background:#5a3a5a"></div>
<div class="a" style="left:100px;top:221px;width:1px;height:20px;background:#283a66"></div>
<div class="a" style="left:100px;top:241px;width:1px;height:163px;background:#6b4a3a"></div>
<div class="a" style="left:100px;top:404px;width:1px;height:71px;background:#5a3a5a"></div>
<div class="a" style="left:543px;top:221px;width:1px;height:20px;background:#283a66"></div>
<div class="a" style="left:543px;top:241px;width:1px;height:163px;background:#6b4a3a"></div>
<div class="a" style="left:543px;top:404px;width:1px;height:71px;background:#5a3a5a"></div>
<div class="a" style="left:403px;top:241px;width:1px;height:61px;background:#6b4a3a"></div>
<div class="a" style="left:403px;top:322px;width:1px;height:82px;background:#6b4a3a"></div>
<div class="a" style="left:403px;top:404px;width:1px;height:71px;background:#5a3a5a"></div>
<div class="a" style="left:473px;top:241px;width:1px;height:61px;background:#6b4a3a"></div>
<div class="a" style="left:473px;top:322px;width:1px;height:82px;background:#6b4a3a"></div>
<div class="a" style="left:473px;top:404px;width:1px;height:71px;background:#5a3a5a"></div>
<div class="a" style="left:403px;top:363px;width:70px;height:22px;border:1px solid #6f7fa6;border-right:none;box-shadow:inset 1px 1px 0 rgba(255,255,255,.45), inset 0 -1px 0 rgba(255,255,255,.45)"></div>
<div class="a" style="left:472px;top:363px;width:72px;height:22px;border:1px solid #b45a6a;box-shadow:inset 1px 1px 0 rgba(255,255,255,.35), inset -1px -1px 0 rgba(255,255,255,.35)"></div>
<div class="a" style="left:402px;top:362px;width:3px;height:3px;background:#3a62b4"></div>
<div class="a" style="left:402px;top:383px;width:3px;height:3px;background:#3a62b4"></div>
<div class="a" style="left:471px;top:362px;width:3px;height:3px;background:#a8404e"></div>
<div class="a" style="left:471px;top:383px;width:3px;height:3px;background:#a8404e"></div>
<div class="a" style="left:542px;top:362px;width:3px;height:3px;background:#a8404e"></div>
<div class="a" style="left:542px;top:383px;width:3px;height:3px;background:#a8404e"></div>
<div class="a" style="left:400px;top:403px;width:75px;height:23px;border:3px solid #d42333"></div>
<div class="a" style="left:275.8px;top:224.4px;font-size:14px;font-weight:bold;letter-spacing:-0.576px;color:#000">TDIST function</div>
<div class="a" style="left:102.3px;top:244.4px;font-size:14px;font-weight:bold;letter-spacing:0.122px;color:#000">Mean</div>
<div class="a" style="left:101.8px;top:264.4px;font-size:14px;font-weight:bold;letter-spacing:-0.243px;color:#000">Standard Deviation</div>
<div class="a" style="left:101.9px;top:285.4px;font-size:14px;font-weight:bold;letter-spacing:-0.563px;color:#000">Significance Level</div>
<div class="a" style="left:176.5px;top:305.4px;font-size:14px;font-weight:bold;letter-spacing:-0.383px;color:#000">t-test: Two Sample Assuming Equal Variances</div>
<div class="a" style="left:102.0px;top:325.4px;font-size:14px;font-weight:bold;letter-spacing:-0.517px;color:#000">Observations</div>
<div class="a" style="left:102.5px;top:346.4px;font-size:14px;font-weight:bold;letter-spacing:-0.416px;color:#000">Variance</div>
<div class="a" style="left:102.5px;top:366.4px;font-size:14px;font-weight:bold;letter-spacing:-0.377px;color:#000">Pooled Variance</div>
<div class="a" style="left:102.0px;top:387.4px;font-size:14px;font-weight:bold;letter-spacing:-0.25px;color:#000">Hypothesized Mean Difference</div>
<div class="a" style="left:102.5px;top:407.4px;font-size:14px;font-weight:bold;letter-spacing:-0.384px;color:#000">Degree of Freedom</div>
<div class="a" style="left:102.5px;top:427.4px;font-size:14px;font-weight:bold;letter-spacing:-0.334px;color:#000">t calculated</div>
<div class="a" style="left:102.5px;top:448.4px;font-size:14px;font-weight:bold;letter-spacing:-0.353px;color:#000">t critical value</div>
<div class="a" style="left:102.5px;top:468.4px;font-size:14px;font-weight:bold;letter-spacing:0px;color:#000">P(T&lt;=t) one-tail</div>
<div class="a" style="right:248.7px;top:244.4px;font-size:14px;font-weight:normal;letter-spacing:-0.05px;color:#000">123.2</div>
<div class="a" style="right:178.2px;top:244.4px;font-size:14px;font-weight:normal;letter-spacing:-0.05px;color:#000">134.6556</div>
<div class="a" style="right:248.7px;top:264.4px;font-size:14px;font-weight:normal;letter-spacing:-0.05px;color:#000">12.65</div>
<div class="a" style="right:178.2px;top:264.4px;font-size:14px;font-weight:normal;letter-spacing:-0.05px;color:#000">18.78965</div>
<div class="a" style="right:248.7px;top:285.4px;font-size:14px;font-weight:normal;letter-spacing:-0.05px;color:#000">0.05</div>
<div class="a" style="right:248.7px;top:325.4px;font-size:14px;font-weight:normal;letter-spacing:-0.05px;color:#000">20</div>
<div class="a" style="right:178.2px;top:325.4px;font-size:14px;font-weight:normal;letter-spacing:-0.05px;color:#000">30</div>
<div class="a" style="right:248.7px;top:346.4px;font-size:14px;font-weight:normal;letter-spacing:-0.05px;color:#000">147.67</div>
<div class="a" style="right:178.2px;top:346.4px;font-size:14px;font-weight:normal;letter-spacing:-0.05px;color:#000">351.185</div>
<div class="a" style="right:248.7px;top:366.4px;font-size:14px;font-weight:normal;letter-spacing:-0.05px;color:#000">271.76</div>
<div class="a" style="right:248.7px;top:387.4px;font-size:14px;font-weight:normal;letter-spacing:-0.05px;color:#000">0</div>
<div class="a" style="left:405px;top:407.4px;font-size:14px;letter-spacing:-0.25px;color:#2a1a2a">=<span style="color:#5068d8">C8</span>+<span style="color:#c03c68">D8</span><span style="color:#a03c60">-</span>2</div>
<div class="a" style="left:467px;top:409px;width:1px;height:14px;background:#9a8aa8"></div>
<div class="a" style="left:706px;top:200px;width:16px;height:275px;background:#f7f7f5;border-radius:7px 0 0 7px"></div>
<svg style="left:710px;top:204px" width="9" height="7" viewBox="0 0 9 7"><path d="M4.5 0.5 L8.5 6.5 H0.5 Z" fill="#5e5e5e"/></svg>
<div class="a" style="left:711px;top:215px;width:7px;height:142px;background:#6a6a6a;border-radius:3.5px"></div>
<svg style="left:710px;top:466px" width="9" height="7" viewBox="0 0 9 7"><path d="M4.5 6.5 L8.5 0.5 H0.5 Z" fill="#5e5e5e"/></svg>

<!-- ===== TABS ===== -->
<div class="a" style="left:2px;top:475px;width:718px;height:25px;background:#e9e9e6"></div>
<svg style="left:21px;top:484px" width="6" height="9" viewBox="0 0 6 9"><path d="M5 0.6 L1 4.5 L5 8.4" fill="none" stroke="#333" stroke-width="1.1"/></svg>
<svg style="left:47px;top:484px" width="6" height="9" viewBox="0 0 6 9"><path d="M1 0.6 L5 4.5 L1 8.4" fill="none" stroke="#333" stroke-width="1.1"/></svg>
<svg style="left:72px;top:487px" width="10" height="3" viewBox="0 0 10 3"><circle cx="1.3" cy="1.5" r="1.2" fill="#333"/><circle cx="4.8" cy="1.5" r="1.2" fill="#333"/><circle cx="8.3" cy="1.5" r="1.2" fill="#333"/></svg>
<div class="a" style="left:100px;top:482.5px;font-size:11.3px;letter-spacing:-0.15px;color:#303030">Sheet22</div>
<div class="a" style="left:152px;top:481px;width:1px;height:14px;background:#d0d0cc"></div>
<div class="a" style="left:161px;top:482.5px;font-size:11.3px;letter-spacing:-0.15px;color:#303030">Sheet11</div>
<div class="a" style="left:211px;top:481px;width:1px;height:14px;background:#d0d0cc"></div>
<div class="a" style="left:221px;top:482.5px;font-size:11.3px;letter-spacing:-0.15px;color:#303030">Sheet12</div>
<div class="a" style="left:272px;top:481px;width:1px;height:14px;background:#d0d0cc"></div>
<div class="a" style="left:284px;top:482.5px;font-size:11.3px;color:#303030;letter-spacing:-0.2px">TTEST function</div>
<div class="a" style="left:370px;top:481px;width:1px;height:14px;background:#d0d0cc"></div>
<svg style="left:379px;top:487px" width="10" height="3" viewBox="0 0 10 3"><circle cx="1.3" cy="1.5" r="1.2" fill="#333"/><circle cx="4.8" cy="1.5" r="1.2" fill="#333"/><circle cx="8.3" cy="1.5" r="1.2" fill="#333"/></svg>
<svg style="left:405px;top:483px" width="11" height="11" viewBox="0 0 11 11"><path d="M5.5 0.5 V10.5 M0.5 5.5 H10.5" stroke="#333" stroke-width="1.1"/></svg>
<svg style="left:436px;top:484px" width="3" height="10" viewBox="0 0 3 10"><circle cx="1.5" cy="1.3" r="1.1" fill="#333"/><circle cx="1.5" cy="5" r="1.1" fill="#333"/><circle cx="1.5" cy="8.7" r="1.1" fill="#333"/></svg>
<div class="a" style="left:450px;top:481px;width:259px;height:15px;background:#f7f7f5;border-radius:7.5px"></div>
<svg style="left:454px;top:484px" width="7" height="9" viewBox="0 0 7 9"><path d="M6 0.5 V8.5 L0.5 4.5 Z" fill="#444"/></svg>
<div class="a" style="left:464px;top:485px;width:175px;height:6px;background:#6e6e6e;border-radius:3px"></div>
<svg style="left:697px;top:484px" width="7" height="9" viewBox="0 0 7 9"><path d="M1 0.5 V8.5 L6.5 4.5 Z" fill="#444"/></svg>
<!-- ===== STATUS ===== -->
<div class="a" style="left:2px;top:500px;width:718px;height:19px;background:#f3f3f1"></div>
<div class="a" style="left:11px;top:506px;font-size:8.5px;color:#555">Edit</div>
<svg style="left:50px;top:506px" width="12" height="10" viewBox="0 0 12 10"><path d="M0.5 9.5 V0.5 H11.5 V3" fill="none" stroke="#444" stroke-width="1"/><path d="M0.5 2.5 H11.5" stroke="#444" stroke-width="1"/><circle cx="7.5" cy="6.5" r="3" fill="#f0f0ec" stroke="#333" stroke-width="1"/><circle cx="7.5" cy="6.5" r="1.2" fill="#333"/><path d="M2.5 4.5 V8 M4 4.5 V6" stroke="#444" stroke-width="0.8"/></svg>
<svg style="left:75px;top:505px" width="12" height="12" viewBox="0 0 12 12"><circle cx="5" cy="1.6" r="1.3" fill="none" stroke="#333" stroke-width="0.9"/><path d="M0.5 3.5 Q5 5.5 9.5 3.5 M5 4.5 V7.5 L2.5 11.5 M5 7.5 L6 9" fill="none" stroke="#333" stroke-width="0.9"/><path d="M7 7.5 L11.5 11.5 M11.5 7.5 L7 11.5" stroke="#333" stroke-width="0.9"/></svg>
<div class="a" style="left:90px;top:506px;font-size:8.6px;font-weight:bold;color:#242424">Accessibility: Investigate</div>
<svg style="left:479px;top:505px" width="11" height="11" viewBox="0 0 11 11"><rect x="0.5" y="0.5" width="10" height="10" fill="none" stroke="#a8a8a8" stroke-width="1"/><path d="M0.5 3.8 H10.5 M0.5 7.2 H10.5 M3.8 0.5 V10.5 M7.2 0.5 V10.5" stroke="#a8a8a8" stroke-width="0.9"/></svg>
<svg style="left:512px;top:505px" width="12" height="11" viewBox="0 0 12 11"><rect x="0.5" y="0.5" width="11" height="10" fill="none" stroke="#a8a8a8" stroke-width="1"/><rect x="2.5" y="2.5" width="7" height="6" fill="none" stroke="#a8a8a8" stroke-width="0.9"/><path d="M3.5 4.5 H8.5 M3.5 6.5 H8.5" stroke="#a8a8a8" stroke-width="0.7"/></svg>
<svg style="left:545px;top:505px" width="12" height="11" viewBox="0 0 12 11"><path d="M0.5 10.5 V0.5 H11.5 V10.5 Z" fill="none" stroke="#a8a8a8" stroke-width="1"/><path d="M3 0.5 V6 H9 V0.5" fill="none" stroke="#a8a8a8" stroke-width="1"/></svg>
<div class="a" style="left:572px;top:510px;width:6px;height:1px;background:#b0b0b0"></div>
<div class="a" style="left:583px;top:510px;width:82px;height:1px;background:#555"></div>
<div class="a" style="left:623px;top:507px;width:1px;height:7px;background:#444"></div>
<svg style="left:669px;top:507px" width="7" height="7" viewBox="0 0 7 7"><path d="M3.5 0 V7 M0 3.5 H7" stroke="#b0b0b0" stroke-width="1"/></svg>
<div class="a" style="left:686px;top:506px;font-size:8.5px;color:#a8a8a8">100%</div>
</body></html>
